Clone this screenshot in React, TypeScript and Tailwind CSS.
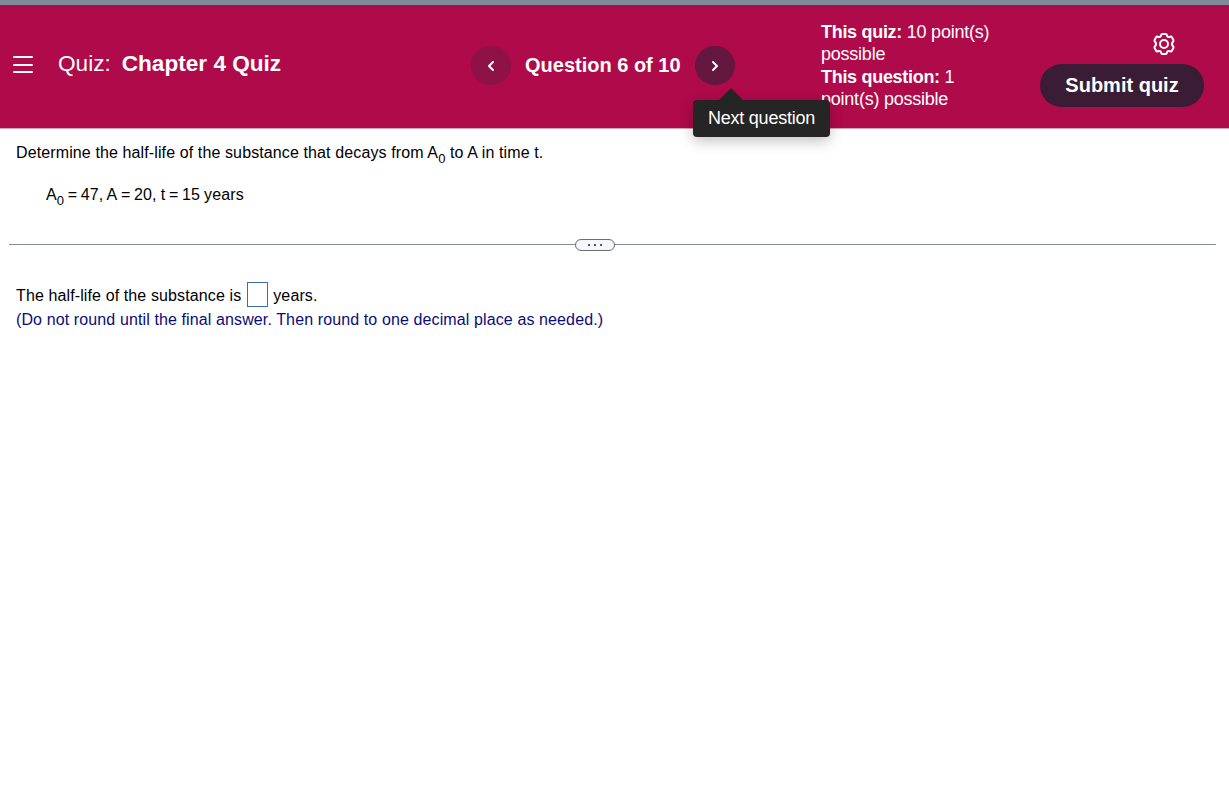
import { ChevronLeft, ChevronRight } from "lucide-react";

const SettingsIcon = () => (
  <svg width="24" height="24" viewBox="0 0 24 24" fill="none" stroke="currentColor" strokeWidth="2" strokeLinejoin="round">
    <path d="M10.3 2 H13.7 Q14.6 2 14.9 3.2 Q15.5 5.6 18 4.8 Q19.3 4.3 19.9 5.3 L21.4 8 Q21.9 8.9 21 9.6 Q18.9 12 21 14.4 Q21.9 15.1 21.4 16 L19.9 18.7 Q19.3 19.7 18 19.2 Q15.5 18.4 14.9 20.8 Q14.6 22 13.7 22 H10.3 Q9.4 22 9.1 20.8 Q8.5 18.4 6 19.2 Q4.7 19.7 4.1 18.7 L2.6 16 Q2.1 15.1 3 14.4 Q5.1 12 3 9.6 Q2.1 8.9 2.6 8 L4.1 5.3 Q4.7 4.3 6 4.8 Q8.5 5.6 9.1 3.2 Q9.4 2 10.3 2 Z" />
    <circle cx="12" cy="12" r="4" />
  </svg>
);

const Header = () => (
  <header className="flex h-[124px] border-b border-[#d9a0b6] bg-[#af0a49] text-white">
    <div className="flex w-[471px] shrink-0 pl-[13px] pt-[51px]">
      <button aria-label="Menu" className="flex h-[17px] w-[20px] flex-col justify-between">
        <span className="h-[2px] w-full rounded-full bg-white" />
        <span className="h-[2px] w-full rounded-full bg-white" />
        <span className="h-[2px] w-full rounded-full bg-white" />
      </button>
      <h1 className="-mt-[6px] ml-[25px] flex gap-[11px] text-[22.6px] leading-[28px] whitespace-nowrap">
        <span>Quiz:</span>
        <span className="font-bold">Chapter 4 Quiz</span>
      </h1>
    </div>

    <nav className="flex w-[350px] shrink-0 items-start pt-[41px]">
      <button aria-label="Previous question" className="flex h-[39px] w-[40px] items-center justify-center rounded-full bg-[#8f1246]">
        <ChevronLeft size={16} strokeWidth={3} />
      </button>
      <span className="ml-[14px] w-[170px] text-[20px] leading-[38px] font-bold whitespace-nowrap">Question 6 of 10</span>
      <div className="relative">
        <button aria-label="Next question" className="flex h-[39px] w-[40px] items-center justify-center rounded-full bg-[#64173f]">
          <ChevronRight size={16} strokeWidth={3} />
        </button>
        <div className="absolute top-[54px] -left-[2px] z-10 h-[37px] w-[137px] rounded-[4px] bg-[#252525] text-center text-[18px] leading-[36px] tracking-[-0.22px] whitespace-nowrap shadow-[0_4px_14px_rgba(0,0,0,0.25)]">
          <svg className="absolute -top-[12px] left-[25px]" width="26" height="13" viewBox="0 0 26 13">
            <path d="M0 13 L13 0 L26 13 Z" fill="#252525" />
          </svg>
          Next question
        </div>
      </div>
    </nav>

    <div className="w-[219px] shrink-0 pt-[16px] text-[18px] leading-[22.3px] tracking-[-0.23px]">
      <p><b className="tracking-[-0.3px]">This quiz:</b> 10 point(s)</p>
      <p>possible</p>
      <p><b className="tracking-[-0.3px]">This question:</b> 1</p>
      <p>point(s) possible</p>
    </div>

    <div className="flex w-[164px] shrink-0 flex-col items-end pt-[27px]">
      <button aria-label="Settings" className="mr-[28px]">
        <SettingsIcon />
      </button>
      <button className="mt-[8px] h-[43px] w-full rounded-full bg-[#3a1c35] pb-[2px] text-[20px] font-bold">Submit quiz</button>
    </div>
  </header>
);

const Sub = () => <sub className="bottom-[-5px] text-[13px]">0</sub>;

const Equals = () => <span className="mx-[-0.6px]"> = </span>;

const Divider = () => (
  <div className="mt-[32px] mr-[13px] ml-[9px] flex h-[12px] items-center">
    <div className="mb-px h-px w-[566px] bg-[#858c94]" />
    <button aria-label="Resize" className="flex h-[12px] w-[40px] items-center justify-center gap-[4px] rounded-full border border-[#6a7078] bg-[#f5f7fa]">
      <span className="h-[2px] w-[2px] bg-[#555b64]" />
      <span className="h-[2px] w-[2px] bg-[#555b64]" />
      <span className="h-[2px] w-[2px] bg-[#555b64]" />
    </button>
    <div className="mb-px h-px flex-1 bg-[#858c94]" />
  </div>
);

const App = () => {
  return (
    <div className="min-h-[804px] bg-white font-['Liberation_Sans',Arial,sans-serif]">
      <div className="h-[5px] bg-[#7f8c99]" />
      <Header />
      <main className="text-[16px] leading-[24px] tracking-[0.115px] text-black">
        <div className="pt-[12px] pl-[16px]">
          <p className="h-[24px] whitespace-nowrap">
            Determine the half-life of the substance that decays from A<Sub /> to A in time t.
          </p>
          <p className="mt-[18px] ml-[30px] h-[24px] whitespace-nowrap [word-spacing:-0.4px]">
            A<Sub /><Equals />47, A<Equals />20, t<Equals />15 years
          </p>
        </div>
        <Divider />
        <div className="pt-[31px] pl-[16px]">
          <div className="flex h-[26px] whitespace-nowrap">
            <span className="leading-[27px]">The half-life of the substance is</span>
            <input aria-label="Half-life in years" className="mr-[5px] ml-[6px] h-[25px] w-[21px] border border-[#3b6cb4]" />
            <span className="leading-[27px]">years.</span>
          </div>
          <p className="whitespace-nowrap text-[#0b0b7c]">
            (Do not round until the final answer. Then round to one decimal place as needed.)
          </p>
        </div>
      </main>
    </div>
  );
};

export default App;
